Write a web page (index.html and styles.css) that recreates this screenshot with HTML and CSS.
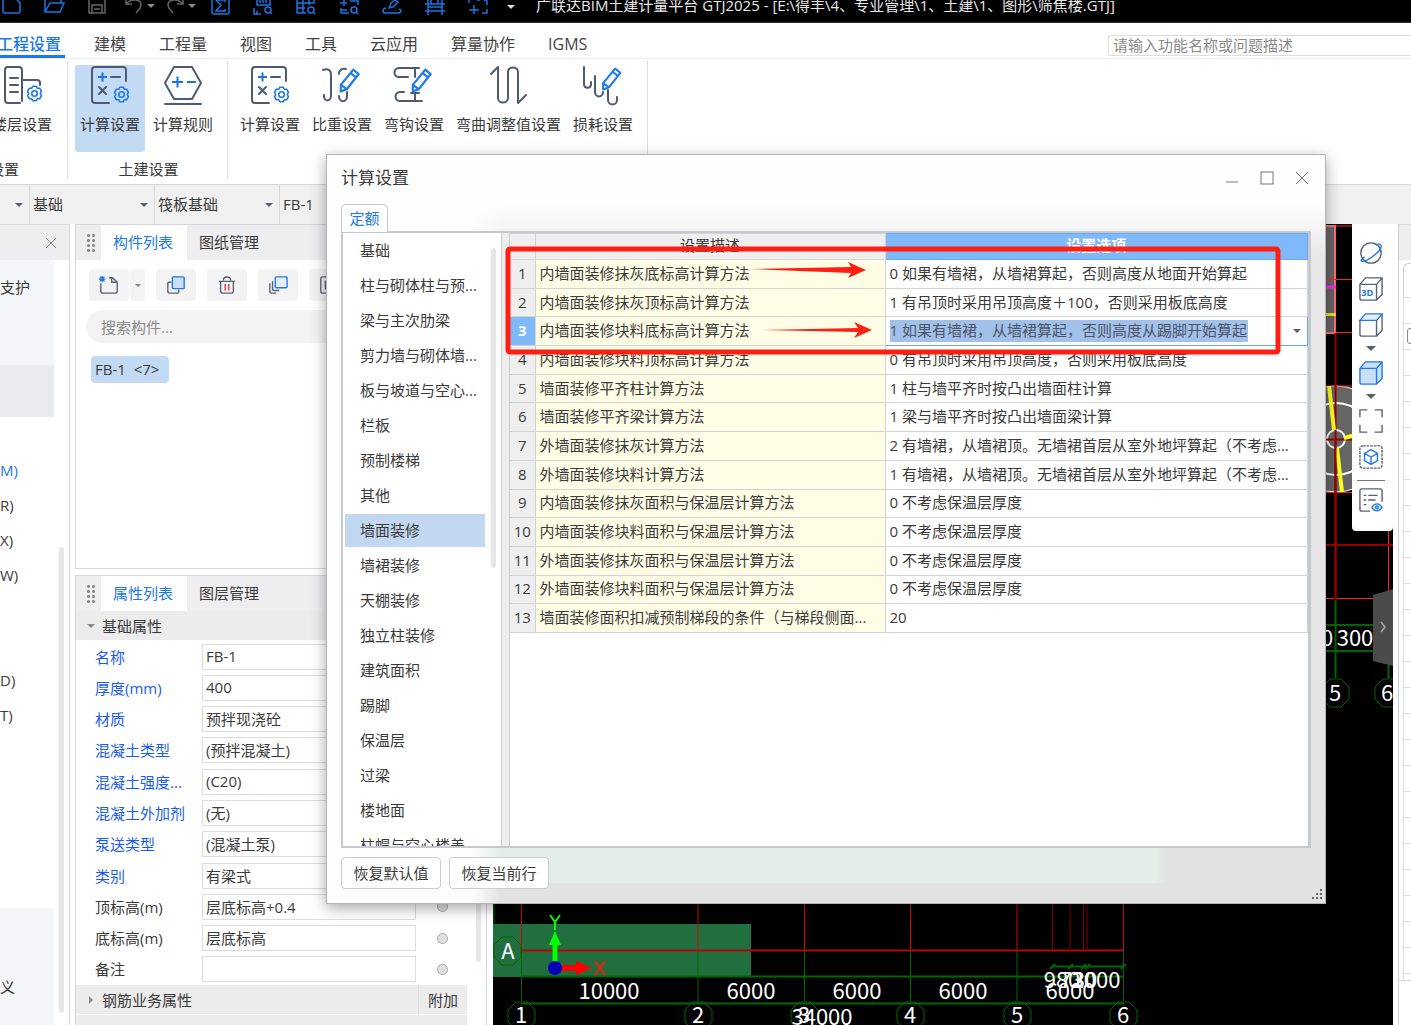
FILE: index.html
```html
<!DOCTYPE html>
<html lang="zh-CN">
<head>
<meta charset="utf-8">
<title>广联达BIM土建计量平台 GTJ2025</title>
<link rel="stylesheet" href="styles.css">
</head>
<body>
<svg class="defs" aria-hidden="true">
  <symbol id="gear" viewBox="0 0 16 16"><path d="M6.3 1.2h3.4l1 1.9 2.1-.1 1.7 2.9-1.1 2.1 1.1 2.1-1.7 2.9-2.1-.1-1 1.9H6.3l-1-1.9-2.1.1-1.7-2.9L2.6 8 1.500 5.900l1.700-2.900 2.100.1z" fill="none" stroke="#1f7ae6" stroke-width="1.500" stroke-linejoin="round"/><circle cx="8" cy="8" r="2.600" fill="none" stroke="#1f7ae6" stroke-width="1.500"/></symbol>
  <symbol id="pencil" viewBox="0 0 20 24"><path d="M1.500 22.500V16.500L13 2.500l5 4L7 20.500zM10.500 5.500l5 4M1.500 16.500l5.500 4" fill="none" stroke="#1f7ae6" stroke-width="2" stroke-linejoin="round"/></symbol>
  <symbol id="calc" viewBox="0 0 40 40"><path d="M36 16V5a3 3 0 0 0-3-3H5a3 3 0 0 0-3 3v30a3 3 0 0 0 3 3h14" class="ink"/><path d="M8 12h9M12.500 7.500v9" class="blue"/><path d="M21 12h9M9 22l7 7M16 22l-7 7" class="ink"/><use href="#gear" x="23" y="21" width="17" height="17"/></symbol>
</svg>

<header class="titlebar">
  <div class="quick">
    <button aria-label="新建"><svg viewBox="0 0 22 16"><path d="M3 0v11a2 2 0 0 0 2 2h13a2 2 0 0 0 2-2V3l-3-3"/></svg></button>
    <button aria-label="打开"><svg viewBox="0 0 22 16"><path d="M2 0v12h15l4-9H7l-5 9M18 3V0"/></svg></button>
    <button aria-label="保存" class="dim"><svg viewBox="0 0 22 16"><path d="M3 0v13h16V0M6 13V5h10v8M8 9h6"/></svg></button>
  </div>
  <div class="history dim">
    <button aria-label="撤销"><svg viewBox="0 0 22 16"><path d="M3 0v4h6M3 4c5-6 15-5 15 1 0 4-3 5-5 8"/></svg></button><i class="caret"></i>
    <button aria-label="恢复"><svg viewBox="0 0 22 16"><path d="M19 0v4h-6M19 4C14-2 4-1 4 5c0 4 3 5 5 8"/></svg></button><i class="caret"></i>
  </div>
  <div class="quick">
    <button aria-label="汇总"><svg viewBox="0 0 22 16"><path d="M3 0v12a2 2 0 0 0 2 2h13a2 2 0 0 0 2-2V0M16 2V0H7l5 5-5 6h9V9"/></svg></button>
    <button aria-label="查看计算式"><svg viewBox="0 0 22 16"><path d="M5 0v5h13V0M8 0v3M11 0v3M14 0v3M2 8v6h7M5 11v3"/><circle cx="16" cy="10" r="3"/><path d="M18 12l2 2"/></svg></button>
    <button aria-label="查看工程量"><svg viewBox="0 0 22 16"><path d="M2 0v13h9M2 3h17V0M8 0v13M14 0v5M2 8h8"/><circle cx="16" cy="10" r="3"/><path d="M18 12l2 2"/></svg></button>
    <button aria-label="查看报表"><svg viewBox="0 0 22 16"><path d="M2 3h7M6 0v6M12 1h8v4M3 8v5h8M3 10h6"/><circle cx="16" cy="10" r="3"/><path d="M18 12l2 2"/></svg></button>
    <button aria-label="编辑"><svg viewBox="0 0 22 16"><path d="M8 8l2-5 4-3 3 2-5 5zM5 8c-4 1-4 5 0 5h13c3-1 2-4 0-4"/></svg></button>
    <button aria-label="楼层"><svg viewBox="0 0 22 16"><path d="M4 0v15M18 0v15M1 4h20M1 11h20M7 0v4M14 0v4M4 7h14"/></svg></button>
    <button aria-label="框选"><svg viewBox="0 0 22 16"><path d="M2 0v3M7 5v9M2 10h10M15 13h5v-4M20 5V1l-3-1M10 0h3"/></svg></button>
  </div>
  <i class="caret more"></i>
  <h1>广联达BIM土建计量平台 GTJ2025 - [E:\得丰\4、专业管理\1、土建\1、图形\筛焦楼.GTJ]</h1>
</header>

<nav class="menu">
  <a href="#" class="on">工程设置</a><a href="#">建模</a><a href="#">工程量</a><a href="#">视图</a><a href="#">工具</a><a href="#">云应用</a><a href="#">算量协作</a><a href="#">IGMS</a>
  <input type="search" aria-label="搜索功能" placeholder="请输入功能名称或问题描述">
</nav>

<section class="ribbon">
  <div class="group first">
    <div class="tools"><button><svg viewBox="0 0 40 40"><path d="M18 38H6a3 3 0 0 1-3-3V5a3 3 0 0 1 3-3h11a3 3 0 0 1 3 3v31M8 13h8M8 20h8M8 27h8M20 15h15a3 3 0 0 1 3 3v2" class="ink"/><use href="#gear" x="24" y="20" width="17" height="17"/></svg>楼层设置</button></div>
    <span class="caption">设置</span>
  </div>
  <div class="group">
    <div class="tools">
      <button class="on"><svg><use href="#calc"/></svg>计算设置</button>
      <button><svg viewBox="0 0 40 40"><path d="M11 2h18l9 16-9 16H11L2 18zM2 39h36" class="ink"/><path d="M9 17h11M14.500 11.500v11M24 17h9" class="blue"/></svg>计算规则</button>
    </div>
    <span class="caption">土建设置</span>
  </div>
  <div class="group last">
    <div class="tools">
      <button><svg><use href="#calc"/></svg>计算设置</button>
      <button><svg viewBox="0 0 40 40"><path d="M1 5c5-2 8 0 8 5v21c0 6-8 6-7-1M17 9c0-4 3-6 7-5M17 31c0 7 8 7 8 0v-4" class="ink"/><use href="#pencil" x="17" y="2" width="22" height="26"/></svg>比重设置</button>
      <button><svg viewBox="0 0 40 40"><path d="M17 3H5a4 4 0 0 0 0 9h9M18 3h7M21 3v9M10 27H6a4 4 0 0 0 0 9h22M21 28v8M17 28h8" class="ink"/><use href="#pencil" x="17" y="2" width="22" height="26"/></svg>弯钩设置</button>
      <button><svg viewBox="0 0 40 40"><path d="M2 9l7-7v31c0 6 10 6 10 0V7c0-6 10-6 10 0v31l8-8" class="ink"/></svg>弯曲调整值设置</button>
      <button><svg viewBox="0 0 40 40"><path d="M1 2v17c0 5 7 5 7 0v-2M12 11v16c0 6 8 6 8 0M25 25v10c0 6 9 6 9 0v-3" class="ink"/><use href="#pencil" x="18" y="1" width="22" height="25"/></svg>损耗设置</button>
    </div>
  </div>
</section>

<div class="selectors">
  <label class="pick empty"><select aria-label="楼层"><option></option></select></label>
  <label class="pick"><select aria-label="构件分类"><option>基础</option></select></label>
  <label class="pick"><select aria-label="构件类型"><option>筏板基础</option></select></label>
  <label class="pick"><select aria-label="构件名称"><option>FB-1</option></select></label>
</div>

<main class="workspace">
  <aside class="nav">
    <div class="bar"><button aria-label="关闭"><svg viewBox="0 0 12 12"><path d="M1 1l10 10M11 1L1 11"/></svg></button></div>
    <div class="tree">
      <div class="items">
        <p class="tint">支护</p><p class="dark"></p>
        <ul><li class="on">M)</li><li>R)</li><li>X)</li><li>W)</li><li></li><li></li><li>D)</li><li>T)</li></ul>
        <p class="tint foot">义</p>
      </div>
      <i class="scroll"></i>
    </div>
  </aside>

  <div class="panels">
    <section class="panel">
      <div class="tabs"><i class="grip"></i><button class="on">构件列表</button><button>图纸管理</button></div>
      <div class="toolrow">
        <span class="split"><button aria-label="新建"><svg viewBox="0 0 22 22"><path d="M2 9v9a2 2 0 0 0 2 2h14a2 2 0 0 0 2-2V8l-5-5h-4M14 3v5h5"/><path d="M1 2l5 5M6 2L1 7M0 4.500h7M3.500 1v7" class="b"/></svg></button><button class="arrow" aria-label="更多新建"><i class="caret"></i></button></span>
        <button aria-label="复制"><svg viewBox="0 0 22 22"><path d="M6 8H3a1 1 0 0 0-1 1v9a2 2 0 0 0 2 2h9a1 1 0 0 0 1-1v-3"/><rect x="7" y="2" width="13" height="13" rx="1" class="b f"/></svg></button>
        <button aria-label="删除"><svg viewBox="0 0 22 22"><path d="M2 7h18M7 6c0-5 8-5 8 0M4 7v11a2 2 0 0 0 2 2h10a2 2 0 0 0 2-2V7"/><path d="M9 10v7M13 10v7" class="r"/></svg></button>
        <button aria-label="层间复制"><svg viewBox="0 0 22 22"><path d="M2 9v9a2 2 0 0 0 2 2h5M5 7v8a2 2 0 0 0 2 2h5"/><rect x="8" y="2" width="13" height="12" rx="1" class="b g"/></svg></button>
        <button aria-label="存档"><svg viewBox="0 0 22 22"><rect x="2" y="2" width="18" height="18" rx="2"/><path d="M7 6v10M7 10l5 5"/></svg></button>
      </div>
      <input class="find" type="search" aria-label="搜索构件" placeholder="搜索构件...">
      <button class="chip">FB-1  &lt;7&gt;</button>
    </section>

    <section class="panel props">
      <div class="tabs"><i class="grip"></i><button class="on">属性列表</button><button>图层管理</button></div>
      <div class="sheet">
        <div class="form">
          <h2><i class="caret"></i>基础属性</h2>
          <div class="fields">
            <label class="key">名称<input value="FB-1"></label>
            <label class="key">厚度(mm)<input value="400"></label>
            <label class="key">材质<input value="预拌现浇砼"></label>
            <label class="key">混凝土类型<input value="(预拌混凝土)"></label>
            <label class="key">混凝土强度...<input value="(C20)"></label>
            <label class="key">混凝土外加剂<input value="(无)"></label>
            <label class="key">泵送类型<input value="(混凝土泵)"></label>
            <label class="key">类别<input value="有梁式"></label>
            <label>顶标高(m)<input value="层底标高+0.4"><input type="checkbox" aria-label="附加顶标高"></label>
            <label>底标高(m)<input value="层底标高"><input type="checkbox" aria-label="附加底标高"></label>
            <label>备注<input value=""><input type="checkbox" aria-label="附加备注"></label>
          </div>
          <h2><i class="caret side"></i>钢筋业务属性<span>附加</span></h2>
          <h2><i class="caret side"></i></h2>
        </div>
        <i class="scroll"></i>
      </div>
    </section>
  </div>

  <section class="canvas">
    <svg class="drawing" viewBox="493 224 900 801" preserveAspectRatio="xMinYMin slice" aria-label="轴网">
      <path d="M1310 226h25v107h-25z" fill="#666" stroke="#ff6b6b" stroke-width="2"/>
      <circle cx="1336" cy="439" r="53" fill="#666" stroke="#fff" stroke-width="1"/>
      <g fill="none" stroke="#fff" stroke-width="2"><circle cx="1336" cy="439" r="36"/><circle cx="1336" cy="439" r="9"/></g>
      <g stroke="#f22" fill="none"><path d="M1336 226h20M1320 279.500h40M1336 332.500h20M1320 386h40M1320 492.500h40M1320 598.500h60M1388.500 531v60"/><path d="M1335.500 333v266M1320 439.500h40M1320 545h73" stroke="#980000" stroke-width="2"/></g>
      <path d="M1320 287h16" stroke="#f02cf0" stroke-width="3"/><path d="M1320 314.500h16" stroke="#e8e020" stroke-width="3"/>
      <path d="M1329 386l5 44M1337 448l5 44M1344 438l12-3" stroke="#ff2" stroke-width="4"/>
      <path d="M1335.500 439v160" stroke="#980000" stroke-width="2"/>
      <g stroke="#060" fill="none"><path d="M1335.500 600v78M1320 625h60M1320 651h60M1388.500 665v13" stroke-width="2"/><path d="M1330 679h11l8 8v12l-8 8h-11l-8-8v-12zM1383 679h11l8 8v12l-8 8h-11l-8-8v-12z"/></g>
      <g class="cad"><text x="1327" y="646">0</text><text x="1355" y="646">300</text><text x="1335" y="701">5</text><text x="1387" y="701">6</text></g>
      <path d="M1373 595l20-6v77l-20-5z" fill="#4b4b4b"/><path d="M1381 622l4 5-4 5" fill="none" stroke="#aaa" stroke-width="1.500"/>

      <path d="M493 924h258v53H493z" fill="#216e3f"/>
      <g stroke="#d00a0a" fill="none"><path d="M521.500 890v61M698 890v61M804.500 890v61M910.500 890v61M1017 890v61M1123.500 890v61"/><path d="M521 950.500h603" stroke-width="2" stroke="#b00808"/><path d="M1052.500 890v61M1070 890v61M1083.500 890v61M1087 890v61" stroke="#800"/></g>
      <g stroke="#006800" fill="none"><path d="M494 890v34"/><path d="M521 976.500h603M521 1003.500h603M1052 966.500h72M1050 969l5-5M1068 969l5-5M1081 969l5-5M1085 969l5-5M1121 969l5-5" stroke-width="2"/><path d="M521.500 951v50M698 951v50M804.500 951v50M910.500 951v50M1017 951v50M1123.500 951v50"/>
        <path d="M502 937h11l8 8v12l-8 8h-11l-8-8v-12zM516 1002h11l8 8v12l-8 8h-11l-8-8v-12zM693 1002h11l8 8v12l-8 8h-11l-8-8v-12zM799 1002h11l8 8v12l-8 8h-11l-8-8v-12zM905 1002h11l8 8v12l-8 8h-11l-8-8v-12zM1012 1002h11l8 8v12l-8 8h-11l-8-8v-12zM1118 1002h11l8 8v12l-8 8h-11l-8-8v-12z"/></g>
      <g class="cad"><text x="508" y="959">A</text><text x="609" y="999">10000</text><text x="751" y="999">6000</text><text x="857" y="999">6000</text><text x="963" y="999">6000</text><text x="1070" y="999">6000</text><text x="1062" y="988">980</text><text x="1078" y="988">720</text><text x="1085" y="988">30</text><text x="1096" y="988">3000</text>
        <text x="521" y="1023">1</text><text x="698" y="1023">2</text><text x="804" y="1023">3</text><text x="822" y="1025">34000</text><text x="910" y="1023">4</text><text x="1017" y="1023">5</text><text x="1123" y="1023">6</text></g>
      <path d="M555 966v-28" stroke="#0f0" stroke-width="5"/><path d="M549 945l6-14 6 14z" fill="#0f0"/><path d="M550 915l5 7 5-7M555 922v8" stroke="#0f0" stroke-width="2" fill="none"/>
      <path d="M561 968h18" stroke="#f00" stroke-width="6"/><path d="M576 961l16 7-16 7z" fill="#f00"/><path d="M595 961l10 14M605 961l-10 14" stroke="#f31b0b" stroke-width="2"/><circle cx="555" cy="968" r="7" fill="#0000b8"/>
    </svg>
    <div class="viewbar">
      <button aria-label="动态观察"><svg viewBox="0 0 26 26"><circle cx="13" cy="13" r="11"/><path d="M6 17c-5 4-4 5-2 5 5 0 21-11 20-17 0-2-3-2-7-1" class="b"/></svg></button>
      <button aria-label="三维"><svg viewBox="0 0 26 26"><path d="M1 8h18v17H3a2 2 0 0 1-2-2zM1 8l6-7h18v18l-6 6M19 8l6-7"/><text x="9" y="21">3D</text></svg></button>
      <button aria-label="俯视"><svg viewBox="0 0 26 26"><path d="M1 8h18v17H3a2 2 0 0 1-2-2zM25 1v18l-6 6"/><path d="M1 8l6-7h18l-6 7z" class="b g"/></svg></button>
      <i class="caret"></i>
      <button aria-label="实体"><svg viewBox="0 0 26 26"><path d="M1 8l6-7h18v18l-6 6H3a2 2 0 0 1-2-2zM1 8h18v17M19 8l6-7" class="b f"/></svg></button>
      <i class="caret"></i>
      <button aria-label="全屏"><svg viewBox="0 0 26 26"><path d="M1 9V1h8M17 1h8v8M25 17v8h-8M9 25H1v-8"/></svg></button>
      <button aria-label="局部三维"><svg viewBox="0 0 26 26"><rect x="1" y="1" width="24" height="24" rx="3" stroke-dasharray="3 1"/><path d="M13 5l7 4v8l-7 4-7-4V9zM6 9l7 4 7-4M13 13v8" class="b"/></svg></button>
      <hr>
      <button aria-label="显示设置"><svg viewBox="0 0 26 26"><path d="M25 15V3a2 2 0 0 0-2-2H3a2 2 0 0 0-2 2v20a2 2 0 0 0 2 2h9M5 8h3M10 8h10M5 13h3M10 13h8M5 18h3"/><path d="M14 21c3-5 8-5 11 0-3 5-8 5-11 0z" class="b"/><circle cx="19.500" cy="21" r="1.500" class="b"/></svg></button>
    </div>
  </section>

  <aside class="rightdock"><div class="docked"><div class="bar"></div><div class="tabedge"></div><div class="rows"><button class="fold" aria-label="折叠"></button></div></div></aside>
</main>

<div class="dialog" role="dialog" aria-labelledby="dlg-title">
  <div class="caption-bar">
    <h2 id="dlg-title">计算设置</h2>
    <button aria-label="最小化"><svg viewBox="0 0 14 14"><path d="M1 11h12"/></svg></button>
    <button aria-label="最大化"><svg viewBox="0 0 14 14"><rect x="1" y="1" width="12" height="12"/></svg></button>
    <button aria-label="关闭"><svg viewBox="0 0 14 14"><path d="M1 1l12 12M13 1L1 13"/></svg></button>
  </div>
  <div class="dialog-tabs"><button>定额</button></div>
  <div class="frame">
    <div class="list">
      <ul>
        <li>基础</li><li>柱与砌体柱与预...</li><li>梁与主次肋梁</li><li>剪力墙与砌体墙...</li><li>板与坡道与空心...</li><li>栏板</li><li>预制楼梯</li><li>其他</li><li class="on">墙面装修</li><li>墙裙装修</li><li>天棚装修</li><li>独立柱装修</li><li>建筑面积</li><li>踢脚</li><li>保温层</li><li>过梁</li><li>楼地面</li><li>柱帽与空心楼盖</li>
      </ul>
      <i class="scroll"></i>
    </div>
    <div class="sheetpane">
      <table>
        <colgroup><col class="c-no"><col class="c-desc"><col></colgroup>
        <thead><tr><th></th><th>设置描述</th><th class="on">设置选项</th></tr></thead>
        <tbody>
          <tr><th>1</th><td>内墙面装修抹灰底标高计算方法</td><td>0 如果有墙裙，从墙裙算起，否则高度从地面开始算起</td></tr>
          <tr><th>2</th><td>内墙面装修抹灰顶标高计算方法</td><td>1 有吊顶时采用吊顶高度＋100，否则采用板底高度</td></tr>
          <tr class="on"><th>3</th><td>内墙面装修块料底标高计算方法</td><td><label class="cellpick"><select aria-label="内墙面装修块料底标高计算方法"><option>1 如果有墙裙，从墙裙算起，否则高度从踢脚开始算起</option></select></label></td></tr>
          <tr><th>4</th><td>内墙面装修块料顶标高计算方法</td><td>0 有吊顶时采用吊顶高度，否则采用板底高度</td></tr>
          <tr><th>5</th><td>墙面装修平齐柱计算方法</td><td>1 柱与墙平齐时按凸出墙面柱计算</td></tr>
          <tr><th>6</th><td>墙面装修平齐梁计算方法</td><td>1 梁与墙平齐时按凸出墙面梁计算</td></tr>
          <tr><th>7</th><td>外墙面装修抹灰计算方法</td><td>2 有墙裙，从墙裙顶。无墙裙首层从室外地坪算起（不考虑...</td></tr>
          <tr><th>8</th><td>外墙面装修块料计算方法</td><td>1 有墙裙，从墙裙顶。无墙裙首层从室外地坪算起（不考虑...</td></tr>
          <tr><th>9</th><td>内墙面装修抹灰面积与保温层计算方法</td><td>0 不考虑保温层厚度</td></tr>
          <tr><th>10</th><td>内墙面装修块料面积与保温层计算方法</td><td>0 不考虑保温层厚度</td></tr>
          <tr><th>11</th><td>外墙面装修抹灰面积与保温层计算方法</td><td>0 不考虑保温层厚度</td></tr>
          <tr><th>12</th><td>外墙面装修块料面积与保温层计算方法</td><td>0 不考虑保温层厚度</td></tr>
          <tr><th>13</th><td>墙面装修面积扣减预制梯段的条件（与梯段侧面...</td><td>20</td></tr>
        </tbody>
      </table>
      <svg class="marks" viewBox="0 0 800 140" aria-hidden="true">
        <rect x="-2" y="16" width="770" height="103" rx="2" fill="none" stroke="#ff1f12" stroke-width="5"/>
        <path d="M241 36l100-2-3-5 18 8-18 8 3-5zM248 97l100-2-4-6 18 8-18 8 4-6z" fill="#ff1f12"/>
      </svg>
    </div>
  </div>
  <div class="actions"><button>恢复默认值</button><button>恢复当前行</button></div>
  <svg class="resize" viewBox="0 0 11 11" aria-hidden="true"><path d="M9 0h2v2H9zM5 4h2v2H5zM9 4h2v2H9zM1 8h2v2H1zM5 8h2v2H5zM9 8h2v2H9z"/></svg>
</div>
</body>
</html>
```
FILE: styles.css
```css
* { box-sizing: border-box; }
body {
  margin: 0;
  height: 100vh;
  overflow: hidden;
  display: flex;
  flex-direction: column;
  position: relative;
  background: #fff;
  color: #3b3b3b;
  font: 15px/20px "Open Sans", "Noto Sans CJK SC", sans-serif;
}
button, input, select { font: inherit; color: inherit; margin: 0; }
button { border: 0; padding: 0; background: none; white-space: nowrap; }
h1, h2, p, ul { margin: 0; padding: 0; font-weight: 400; list-style: none; }
svg { display: block; flex: none; }
.defs { position: absolute; width: 0; height: 0; }
.ink { fill: none; stroke: #4f5b72; stroke-width: 2; stroke-linecap: round; stroke-linejoin: round; }
.blue { fill: none; stroke: #1873e8; stroke-width: 2; }
.caret { flex: none; width: 0; height: 0; border: 4px solid transparent; border-top-color: #58606e; border-bottom-width: 0; }
.scroll { flex: none; background: #e6e6e8; border-radius: 3px; }

/* title bar */
.titlebar { flex: none; height: 23px; display: flex; align-items: flex-start; background: #000; border-bottom: 1px solid #333; overflow: hidden; }
.quick { display: flex; gap: 21px; }
.titlebar svg { width: 22px; height: 16px; fill: none; stroke: #1b74e4; stroke-width: 1.5; }
.titlebar .dim svg { stroke: #666; }
.history { display: flex; align-items: flex-start; gap: 2px; padding: 0 13px 0 15px; }
.titlebar .caret { margin: 4px 8px 0 0; border-top-color: #8a8a8a; }
.history .caret + button { margin-left: -1px; }
.history .caret:last-child { margin-right: 0; }
.titlebar .more { margin: 5px 21px 0 18px; border-top-color: #ddd; }
.titlebar h1 { color: #e8e8e8; font-size: 15px; line-height: 10px; white-space: nowrap; }

/* menu */
.menu { flex: none; height: 36px; display: flex; align-items: stretch; gap: 33px; border-bottom: 1px solid #eee; }
.menu a { color: #444; text-decoration: none; font-size: 16px; line-height: 42px; white-space: nowrap; }
.menu .on { width: 65px; margin-right: -4px; display: flex; justify-content: flex-end; padding-right: 4px; color: #1b78e6; font-weight: 500; border-bottom: 3px solid #1b78e6; }
.menu input { margin: 12px 0 2px auto; width: 303px; border: 1px solid #ddd; border-right: 0; border-radius: 3px 0 0 3px; padding: 0 4px 1px; background: #fff; outline: 0; }
input::placeholder { color: #8a8a8a; opacity: 1; }

/* ribbon */
.ribbon { flex: none; height: 126px; display: flex; padding: 2px 0 5px; border-bottom: 1px solid #d6d6d6; }
.group { display: flex; flex-direction: column; justify-content: space-between; align-items: center; padding: 4px 9px 0 7px; border-right: 1px solid #dcdcdc; }
.group .caption { padding-left: 4px; }
.group.first { width: 68px; padding: 4px 15px 0 0; align-items: flex-end; }
.group.first .caption { align-self: flex-start; margin-left: -15px; }
.group.last { padding-right: 9px; }
.tools { display: flex; gap: 3px; }
.last .tools { gap: 2px; }
.tools button { height: 87px; padding: 0 5px; display: flex; flex-direction: column; align-items: center; gap: 9px; border-radius: 3px; }
.group.first button { padding: 0; }
.tools .on { background: #c2daf3; }
.tools svg { width: 40px; height: 40px; overflow: visible; }

/* selectors */
.selectors { flex: none; height: 39px; display: flex; background: #f0f0f0; }
.pick { position: relative; width: 125px; border-right: 1px solid #d8d8d8; display: flex; align-items: center; }
.pick.empty { width: 30px; }
.pick select { appearance: none; width: 100%; height: 100%; border: 0; padding: 0 3px 2px; background: none; }
.pick::after, .cellpick::after { content: ""; position: absolute; right: 6px; border: 4px solid transparent; border-top-color: #58606e; border-bottom-width: 0; }
.pick:last-child { border: 0; }

/* workspace */
.workspace { flex: 1; min-height: 0; display: grid; grid-template-columns: 70px 412px 1fr 13px; column-gap: 5px; background: #fff; }
.bar { height: 36px; flex: none; background: #eeeef0; border-top: 1px solid #dadada; }
.nav { display: flex; flex-direction: column; border-right: 1px solid #d8dade; min-height: 0; }
.nav .bar { display: flex; align-items: center; justify-content: flex-end; padding-right: 12px; }
.nav .bar svg { width: 12px; height: 12px; stroke: #888; stroke-width: 1; }
.tree { flex: 1; min-height: 0; display: flex; justify-content: space-between; }
.items { width: 54px; overflow: hidden; display: flex; flex-direction: column; }
.tint { height: 105px; padding-top: 17px; background: #f5f6f9; flex: none; }
.dark { height: 52px; background: #e9ebf0; flex: none; }
.items ul { padding-top: 36px; flex: 1; }
.items li { height: 35px; line-height: 35px; }
.items .on { color: #1b78e6; }
.items .foot { height: 117px; padding-top: 69px; }
.nav .scroll { width: 5px; margin: 287px 5px 12px 0; }

.panels { display: flex; flex-direction: column; gap: 6px; min-height: 0; min-width: 0; }
.panel { height: 345px; flex: none; border: 1px solid #d4d6da; display: flex; flex-direction: column; align-items: flex-start; }
.props { flex: 1; align-items: stretch; border-bottom: 0; min-height: 0; }
.tabs { width: 100%; height: 35px; flex: none; display: flex; align-items: center; background: #eeeef0; }
.tabs button { width: 86px; height: 100%; padding: 0 2px 2px 0; }
.tabs .on { background: #fff; color: #1b78e6; }
.grip { width: 10px; height: 20px; margin: 0 5px 0 10px; background: radial-gradient(circle, #888 1px, transparent 2px) 0 0 / 5px 5px; }
.toolrow { display: flex; gap: 11px; padding: 9px 0 9px 13px; width: 100%; overflow: hidden; }
.toolrow button { width: 40px; height: 32px; display: flex; align-items: center; justify-content: center; background: #f3f3f4; border-radius: 4px; flex: none; }
.split { display: flex; gap: 1px; }
.toolrow .arrow { width: 15px; }
.arrow .caret { border-width: 3px; border-bottom: 0; border-top-color: #888; }
.toolrow svg { width: 20px; height: 20px; fill: none; stroke: #596273; stroke-width: 1.5; }
svg .b { stroke: #1f7ae6; fill: none; }
svg .f { fill: #cbdff8; }
svg .g { fill: #e4f0fe; }
svg .r { stroke: #e33; }
.find { width: calc(100% - 20px); height: 33px; margin-left: 10px; border: 0; border-radius: 17px; padding: 0 15px; background: #f3f3f3; outline: 0; }
.chip { margin: 13px 0 0 15px; height: 27px; width: 78px; padding: 0 4px 1px; text-align: left; background: #c2daf3; border-radius: 4px; white-space: pre; }
.sheet { flex: 1; min-height: 0; display: flex; justify-content: space-between; }
.form { width: 391px; display: flex; flex-direction: column; flex: none; overflow: hidden; }
.form h2 { flex: none; height: 30px; font-size: 15px; display: flex; align-items: center; gap: 7px; padding-left: 11px; background: #ececed; border-bottom: 1px solid #fff; }
.form h2 .caret { border-width: 4px; border-bottom-width: 0; border-top-color: #888; }
.form h2 .side { border: 4px solid transparent; border-left-color: #888; border-right-width: 0; margin: 0 2px; }
.form h2 span { margin-left: auto; width: 49px; line-height: 30px; text-align: center; border-left: 1px solid #ddd; }
.fields { height: 344px; flex: none; display: grid; grid-auto-rows: 1fr; }
.fields label { display: grid; grid-template-columns: 107px 214px 1fr; align-items: center; padding-left: 19px; }
.fields input { width: 100%; height: 26px; border: 1px solid #dcdcdc; padding: 0 3px 1px; background: #fff; }
.fields input[type=checkbox] { appearance: none; width: 11px; height: 11px; padding: 0; border: 1px solid #aaa; border-radius: 50%; background: #e0e0e0; margin-left: 21px; }
.fields .key { color: #1a5cf0; }
.fields .key input { color: #3b3b3b; }
.props .scroll { width: 5px; margin: 20px 5px 63px 0; }

.canvas { position: relative; background: #000; overflow: hidden; min-width: 0; }
.workspace > .canvas { margin-left: 1px; }
.drawing { width: 100%; height: 100%; }
.cad { fill: #fff; font: 22px "Noto Sans CJK SC", sans-serif; text-anchor: middle; }
.viewbar { position: absolute; right: 0; top: 0; width: 41px; height: 307px; padding: 17px 3px 0 0; background: #fff; border-radius: 0 0 4px 4px; display: flex; flex-direction: column; align-items: center; gap: 12px; }
.viewbar svg { width: 24px; height: 24px; fill: none; stroke: #596273; stroke-width: 1.5; overflow: visible; }
.viewbar text { font: 700 10px "Open Sans", sans-serif; fill: #1f7ae6; stroke: none; text-anchor: middle; }
.viewbar .caret { border-width: 5px; border-bottom: 0; margin: -3px 0 -2px; }
.viewbar hr { width: 28px; margin: -1px 0 -5px; border: 0; border-top: 1px solid #777; flex: none; }

.rightdock { border-left: 1px solid #c9cdd4; overflow: hidden; }
.docked { height: 757px; display: flex; flex-direction: column; border-bottom: 1px solid #d4d6da; }
.tabedge { height: 34px; margin: 3px 0 0 4px; border: 1px solid #c9cdd4; border-width: 1px 0 0 1px; border-radius: 6px 0 0; flex: none; }
.rows { flex: 1; padding: 31px 0 0 3px; margin-left: 4px; border-left: 1px solid #ddd; background: repeating-linear-gradient(#ddd 0 1px, #fff 1px 26px); }
.fold { width: 17px; height: 16px; display: block; border: 1px solid #888; border-radius: 3px; background: #fff; }

/* dialog window */
.dialog {
  position: absolute;
  inset: 154px 85px 121px 326px;
  display: flex;
  flex-direction: column;
  padding: 0 14px 0;
  border: 1px solid #b4b4b4;
  box-shadow: 0 4px 14px rgba(0, 0, 0, .35);
  background:
    linear-gradient(90deg, #fdfdfd 145px, transparent) left top / 175px 100% no-repeat,
    linear-gradient(90deg, #e4ede7 830px, #e2e2e2 840px) left bottom 20px / 100% 35px no-repeat,
    linear-gradient(#fefefe 50px, #f6f6f6 70px, #e8e8e8 100px, #e2e2e2);
}
.caption-bar { height: 49px; flex: none; display: flex; align-items: center; gap: 21px; padding: 0 2px 3px 0; }
.caption-bar h2 { flex: 1; font-size: 17px; }
.caption-bar svg { width: 14px; height: 14px; fill: none; stroke: #777; stroke-width: 1; }
.dialog-tabs { flex: none; height: 27px; }
.dialog-tabs button { height: 28px; width: 47px; padding-bottom: 2px; background: #fff; color: #1b78e6; border: 1px solid #c2c7ce; border-bottom: 0; border-radius: 5px 5px 0 0; position: relative; }
.frame { flex: 1; min-height: 0; display: flex; gap: 7px; background: #eee; border: 2px solid #c5c8cc; border-right-width: 3px; }
.list { width: 159px; flex: none; background: #fff; border-right: 1px solid #ccc; display: flex; justify-content: space-between; overflow: hidden; }
.list ul { padding: 1px 0 0 2px; display: flex; flex-direction: column; gap: 2px; }
.list li { width: 140px; height: 33px; flex: none; padding-left: 15px; line-height: 33px; white-space: nowrap; }
.list .on { background: #c2d8f0; }
.list .scroll { width: 5px; height: 320px; margin: 15px 5px 0 0; }
.sheetpane { flex: 1; position: relative; background: #fff; border-left: 1px solid #ccc; min-width: 0; }
table { width: 100%; height: 400px; table-layout: fixed; border-collapse: collapse; }
.c-no { width: 25px; }
.c-desc { width: 350px; }
th, td { padding: 0 0 2px; border: 1px solid #d3d3d3; font-weight: 400; white-space: nowrap; overflow: hidden; }
tr > :first-child { border-left: 0; }
th { background: #efefef; }
thead tr { height: 26px; }
thead th { padding-bottom: 3px; }
td { padding-left: 4px; text-align: left; }
td:nth-child(2) { background: #fffde5; }
thead .on, tr.on th { background: #80b9fa; color: #fff; font-weight: 700; }
thead .on { border-color: #6aa9f0; }
tr.on td:last-child { border: 1px solid #6aa9f0; padding-bottom: 0; }
.cellpick { position: relative; display: flex; align-items: center; height: 22px; }
.cellpick select { appearance: none; border: 0; padding: 0 0 2px; height: 22px; background: #a2c1ea; color: #4b5566; border-radius: 0; }
.marks { position: absolute; left: 0; top: 0; width: 800px; height: 140px; overflow: visible; }
.actions { flex: none; height: 55px; padding-top: 9px; display: flex; align-items: flex-start; gap: 8px; }
.actions button { height: 32px; width: 100px; background: #fff; border: 1px solid #ccc; border-radius: 4px; }
.resize { position: absolute; right: 3px; bottom: 3px; width: 11px; height: 11px; fill: #666; }
```
